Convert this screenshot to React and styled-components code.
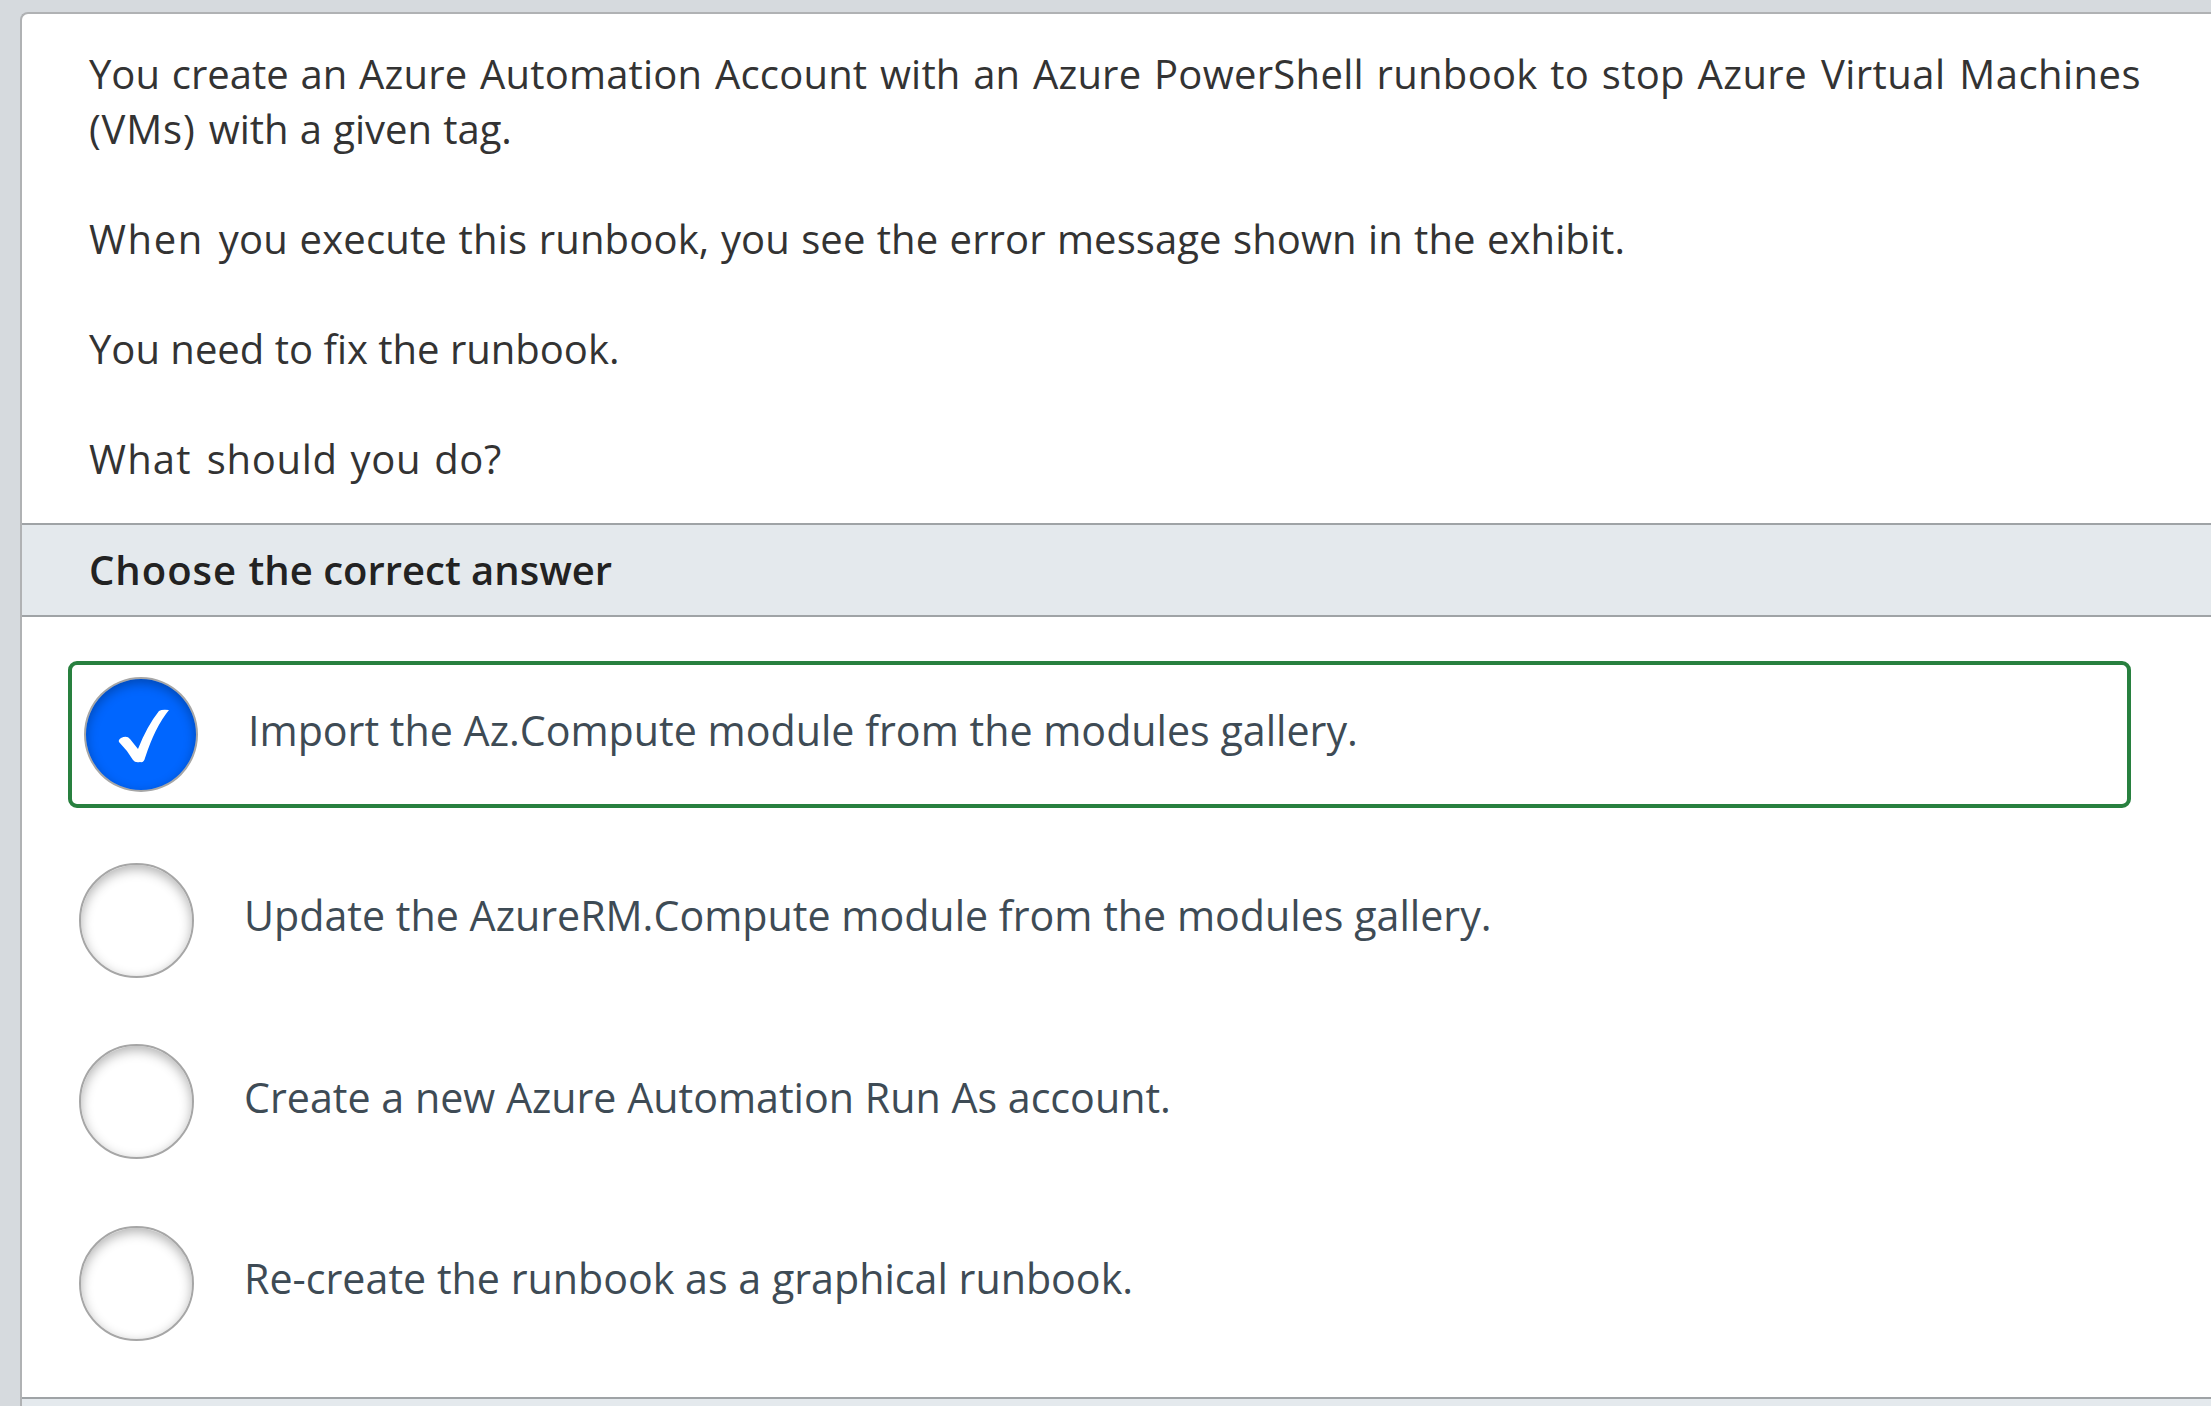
import React from "react";
import styled, { createGlobalStyle } from "styled-components";

const GlobalStyle = createGlobalStyle`
  * { box-sizing: border-box; }
  html, body { margin: 0; background: #d6dade; overflow: hidden; }
`;

const Page = styled.div`
  height: 1406px;
  padding: 12px 0 0 20px;
  background: #d6dade;
  overflow: hidden;
`;

const Card = styled.main`
  display: flex;
  flex-direction: column;
  height: 1500px;
  border: 2px solid #b0b2b4;
  border-right: 0;
  border-radius: 8px 0 0 0;
  background: #fff;
  overflow: hidden;
`;

const Question = styled.section`
  height: 509px;
  padding: 32px 0 0 67px;
  font-family: "Open Sans", sans-serif;
  font-size: 40px;
  line-height: 55px;
  color: #333;
`;

const Paragraph = styled.p`
  margin: 0 0 55px;
  white-space: nowrap;
`;

const Line = styled.span`
  display: block;
  width: max-content;
  white-space: pre;
`;

const Phrase = styled.span`
  letter-spacing: ${(p) => p.$track || 0}px;
  word-spacing: ${(p) => p.$word || 0}px;
`;

const Heading = styled.h2`
  flex: none;
  height: 94px;
  margin: 0;
  padding: 0 0 0 67px;
  border: solid #9fa3a6;
  border-width: 2px 0;
  background: #e4e9ed;
  font: 600 40px/89px "Open Sans", sans-serif;
  color: #222;
`;

const Answers = styled.section`
  flex: none;
  height: 780px;
  padding: 44px 0 0 46px;
`;

const Option = styled.label`
  display: flex;
  align-items: center;
  width: 2063px;
  height: ${(p) => (p.$correct ? 147 : 116)}px;
  margin-bottom: ${(p) => (p.$correct ? 54 : 65.5)}px;
  padding-left: ${(p) => (p.$correct ? 12 : 11)}px;
  border: ${(p) => (p.$correct ? "4px solid #28803f" : "0")};
  border-radius: 9px;
`;

const Radio = styled.span`
  display: grid;
  place-items: center;
  flex: none;
  width: ${(p) => (p.$checked ? 114 : 115)}px;
  height: 115px;
  border: 2px solid #a6a6a6;
  border-radius: 50%;
  background: ${(p) => (p.$checked ? "#0066ff" : "#fff")};
  box-shadow: inset 0 4px 12px rgba(0, 0, 0, 0.3);
`;

const Check = styled.svg`
  width: 111px;
  height: 111px;
`;

const OptionText = styled.span`
  padding: 0 0 10px 50px;
  font-family: "Open Sans", sans-serif;
  font-size: 41.2px;
  line-height: 56px;
  color: #3e4b55;
  white-space: nowrap;
`;

const question = [
  [
    [
      { text: "You create an ", word: 1.4 },
      { text: "Azure Automation Account with an Azure ", track: 0.2, word: 2 },
      { text: "PowerShell runbook to stop ", track: 0.3, word: 1.9 },
      { text: "Azure Virtual Machines", track: 0.45, word: 3 },
    ],
    [
      { text: "(VMs) ", track: 0.8, word: 2 },
      { text: "with a given tag.", word: 0.8 },
    ],
  ],
  [
    [
      { text: "When ", track: 1.6, word: 3 },
      { text: "you execute this runbook, ", track: 0.15, word: 1.1 },
      { text: "you see the error message shown in the exhibit.", track: 0.1, word: 0.8 },
    ],
  ],
  [[{ text: "You need to fix the runbook." }]],
  [[{ text: "What ", track: 1.2, word: 3.5 }, { text: "should you do?", track: 0.65, word: 2 }]],
];

const heading = [
  { text: "Choose ", track: 1 },
  { text: "the correct answer" },
];

const options = [
  { text: "Import the Az.Compute module from the modules gallery.", correct: true },
  { text: "Update the AzureRM.Compute module from the modules gallery." },
  { text: "Create a new Azure Automation Run As account." },
  { text: "Re-create the runbook as a graphical runbook." },
];

function TextLine({ phrases }) {
  return (
    <Line>
      {phrases.map((p) => (
        <Phrase key={p.text} $track={p.track} $word={p.word}>{p.text}</Phrase>
      ))}
    </Line>
  );
}

export default function App() {
  return (
    <>
      <GlobalStyle />
      <Page>
        <Card>
          <Question>
            {question.map((lines, i) => (
              <Paragraph key={i}>
                {lines.map((phrases, j) => <TextLine key={j} phrases={phrases} />)}
              </Paragraph>
            ))}
          </Question>
          <Heading><TextLine phrases={heading} /></Heading>
          <Answers>
            {options.map((o) => (
              <Option key={o.text} $correct={o.correct}>
                <Radio $checked={o.correct}>
                  {o.correct && (
                    <Check viewBox="0 0 111 111">
                      <path d="M33 63Q32 61 35 59Q41 56 44 60L52 70Q61 47 73 32Q76 30 83 31Q69 48 59 79Q58 84 54 83Q49 84 47 81Q41 71 33 63Z" fill="#fff" />
                    </Check>
                  )}
                </Radio>
                <OptionText>{o.text}</OptionText>
              </Option>
            ))}
          </Answers>
          <Heading />
        </Card>
      </Page>
    </>
  );
}
